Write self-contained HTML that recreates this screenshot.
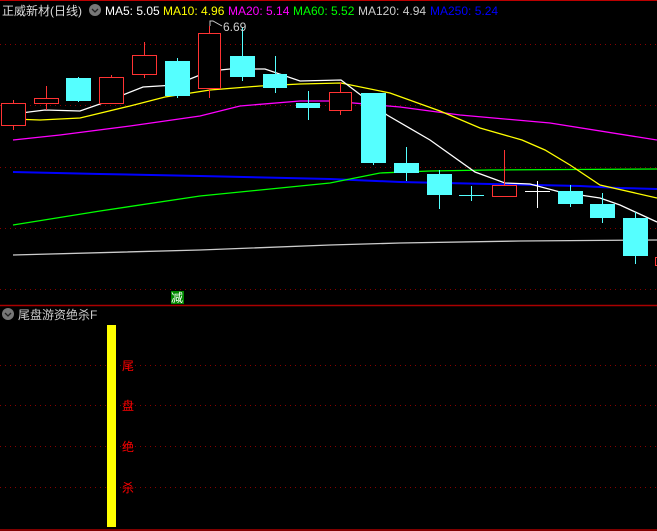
<!DOCTYPE html>
<html><head><meta charset="utf-8"><style>
html,body{margin:0;padding:0;background:#000;width:657px;height:531px;overflow:hidden}
svg{display:block}
text{font-family:"Liberation Sans","Noto Sans CJK SC",sans-serif;font-size:12px}
</style></head><body>
<svg width="657" height="531" viewBox="0 0 657 531" xmlns="http://www.w3.org/2000/svg">
<rect width="657" height="531" fill="#000"/>
<line x1="0" y1="0.5" x2="657" y2="0.5" stroke="#b00" stroke-width="1"/>
<g stroke="#800" stroke-dasharray="1,4" stroke-width="1">
<line x1="0" y1="44.5" x2="657" y2="44.5"/><line x1="0" y1="105.5" x2="657" y2="105.5"/>
<line x1="0" y1="167.5" x2="657" y2="167.5"/><line x1="0" y1="228.5" x2="657" y2="228.5"/>
<line x1="0" y1="289.5" x2="657" y2="289.5"/>
<line x1="0" y1="365.5" x2="657" y2="365.5"/><line x1="0" y1="405.5" x2="657" y2="405.5"/>
<line x1="0" y1="446.5" x2="657" y2="446.5"/><line x1="0" y1="487.5" x2="657" y2="487.5"/>
</g>
<line x1="0" y1="305.5" x2="657" y2="305.5" stroke="#a00" stroke-width="1.5"/>
<line x1="0" y1="530" x2="657" y2="530" stroke="#a00" stroke-width="1.5"/>

<g fill="none" stroke-width="1.3">
<polyline stroke="#ccc" points="13,255 200,250 330,245 400,243 520,241 657,240"/>
<polyline stroke="#00f" stroke-width="2" points="13,172 100,174 200,176 330,179 400,182 490,184 580,186 620,188 657,189"/>
<polyline stroke="#0f0" points="13,225 100,211 200,196 330,183 380,173 430,171 490,170 657,169"/>
<polyline stroke="#f0f" points="13,140 60,135 130,126 200,116 240,106 300,101 330,101 400,107 460,115 550,123 657,140"/>
<polyline stroke="#ff0" points="13,119 40,120 80,118 130,106 165,97 210,90 260,86 300,84 341,83 390,93 440,111 480,128 522,140 545,150 570,165 600,185 657,198"/>
<polyline stroke="#fff" points="13,114 45,110 80,111 100,104 143,87 175,85 210,71 230,69 265,69 300,81 341,80 387,115 430,140 475,172 505,183 530,184 560,192 600,198 620,205 657,222"/>
</g>

<g stroke="#f33" fill="none" stroke-width="1">
<line x1="13.5" y1="100" x2="13.5" y2="130"/><rect x="1.5" y="103.5" width="24" height="22" fill="#000"/>
<line x1="46.5" y1="86" x2="46.5" y2="110"/><rect x="34.5" y="98.5" width="24" height="5" fill="#000"/>
<line x1="111.5" y1="75" x2="111.5" y2="78"/><rect x="99.5" y="77.5" width="24" height="26" fill="#000"/>
<line x1="144.5" y1="42" x2="144.5" y2="78"/><rect x="132.5" y="55.5" width="24" height="19" fill="#000"/>
<line x1="209.5" y1="26" x2="209.5" y2="98"/><rect x="198.5" y="33.5" width="22" height="55" fill="#000"/>
<line x1="340.5" y1="82" x2="340.5" y2="115"/><rect x="329.5" y="92.5" width="22" height="18" fill="#000"/>
<line x1="504.5" y1="150" x2="504.5" y2="185"/><rect x="492.5" y="185.5" width="24" height="11"/>
<rect x="655.5" y="257.5" width="4" height="8"/>
</g>
<g fill="#5ff" stroke="#5ff">
<line x1="78.5" y1="77" x2="78.5" y2="102"/><rect x="66" y="78" width="25" height="23" stroke="none"/>
<line x1="177.5" y1="58" x2="177.5" y2="98"/><rect x="165" y="61" width="25" height="35" stroke="none"/>
<line x1="242.5" y1="27" x2="242.5" y2="81"/><rect x="230" y="56" width="25" height="21" stroke="none"/>
<line x1="275.5" y1="56" x2="275.5" y2="93"/><rect x="263" y="74" width="24" height="14" stroke="none"/>
<line x1="308.5" y1="91" x2="308.5" y2="120"/><rect x="296" y="103" width="24" height="5" stroke="none"/>
<line x1="373.5" y1="93" x2="373.5" y2="165"/><rect x="361" y="93" width="25" height="70" stroke="none"/>
<line x1="406.5" y1="147" x2="406.5" y2="181"/><rect x="394" y="163" width="25" height="10" stroke="none"/>
<line x1="439.5" y1="170" x2="439.5" y2="209"/><rect x="427" y="174" width="25" height="21" stroke="none"/>
<line x1="471.5" y1="186" x2="471.5" y2="201"/><line x1="459" y1="195.5" x2="484" y2="195.5"/>
<line x1="570.5" y1="185" x2="570.5" y2="207"/><rect x="558" y="191" width="25" height="13" stroke="none"/>
<line x1="602.5" y1="193" x2="602.5" y2="223"/><rect x="590" y="204" width="25" height="14" stroke="none"/>
<line x1="635.5" y1="212" x2="635.5" y2="264"/><rect x="623" y="218" width="25" height="38" stroke="none"/>
</g>
<g stroke="#fff"><line x1="537.5" y1="181" x2="537.5" y2="208"/><line x1="525" y1="191.5" x2="550" y2="191.5"/></g>

<polyline points="210,26 210,21 213,21 222,26" fill="none" stroke="#ccc" stroke-width="1"/>
<text x="223" y="31" fill="#ccc">6.69</text>

<text x="2" y="15" fill="#ddd" font-size="13">正威新材(日线)</text>
<circle cx="95" cy="10" r="6" fill="#777"/><path d="M92 9 l3 3 l3 -3" stroke="#222" fill="none" stroke-width="1.3"/>
<text x="105" y="15" fill="#fff">MA5: 5.05</text>
<text x="163" y="15" fill="#ff0">MA10: 4.96</text>
<text x="228" y="15" fill="#f0f">MA20: 5.14</text>
<text x="293" y="15" fill="#0f0">MA60: 5.52</text>
<text x="358" y="15" fill="#ccc">MA120: 4.94</text>
<text x="430" y="15" fill="#00f">MA250: 5.24</text>

<rect x="171" y="291" width="13" height="13" fill="#080"/>
<text x="171" y="302" fill="#fff" font-size="12">减</text>

<circle cx="8" cy="314" r="6" fill="#777"/><path d="M5 313 l3 3 l3 -3" stroke="#222" fill="none" stroke-width="1.3"/>
<text x="18" y="319" fill="#ccc" font-size="13">尾盘游资绝杀F</text>

<rect x="107" y="325" width="9" height="202" fill="#ff0"/>
<g fill="#f00" font-size="12">
<text x="122" y="370">尾</text><text x="122" y="410">盘</text>
<text x="122" y="451">绝</text><text x="122" y="492">杀</text>
</g>
</svg>
</body></html>
